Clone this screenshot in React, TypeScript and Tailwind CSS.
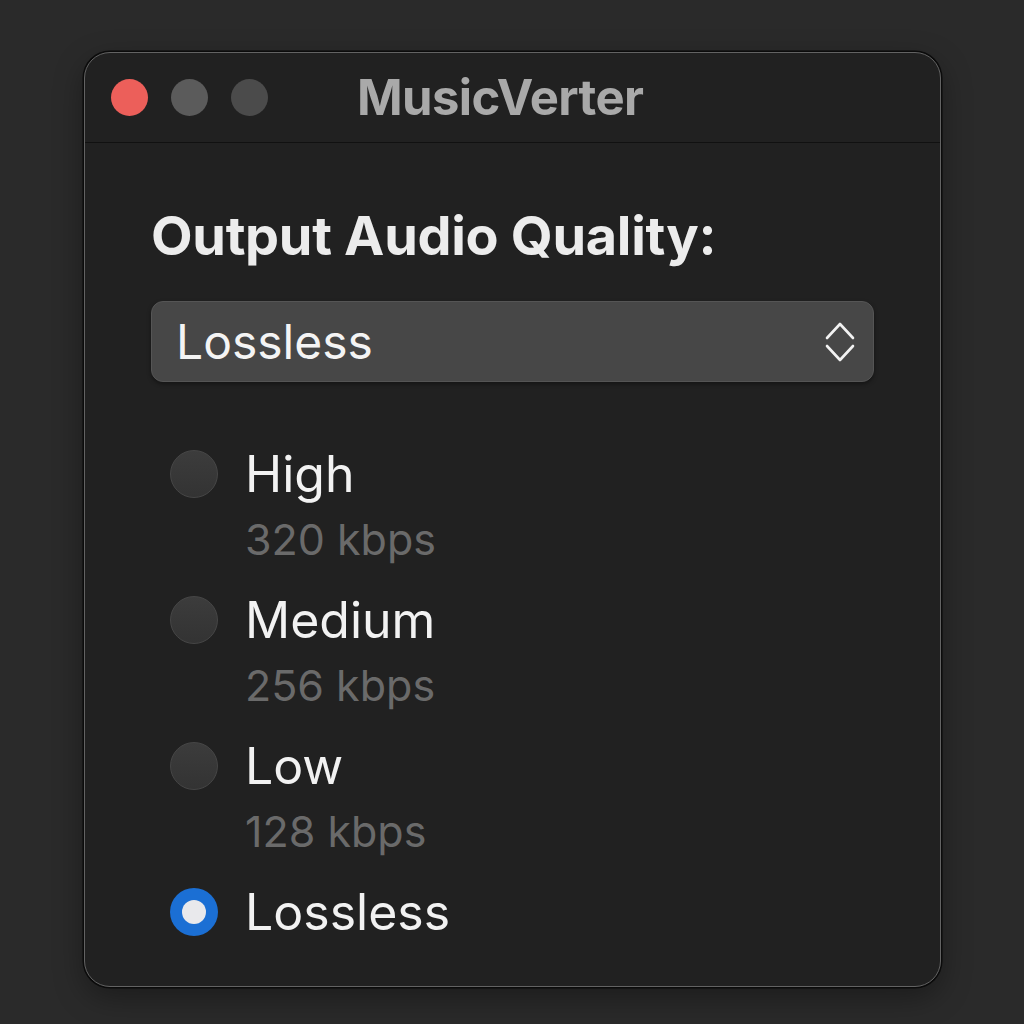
import React from 'react';

interface QualityOption {
  id: string;
  label: string;
  bitrate?: string;
}

const options: QualityOption[] = [
  { id: 'high', label: 'High', bitrate: '320 kbps' },
  { id: 'medium', label: 'Medium', bitrate: '256 kbps' },
  { id: 'low', label: 'Low', bitrate: '128 kbps' },
  { id: 'lossless', label: 'Lossless' },
];

const Radio = ({ checked }: { checked: boolean }) =>
  checked ? (
    <span className="flex items-center justify-center w-[48px] h-[48px] rounded-full bg-[#1b6fd4] shrink-0">
      <span className="w-[24px] h-[24px] rounded-full bg-[#e9e9ec]" />
    </span>
  ) : (
    <span className="w-[48px] h-[48px] rounded-full bg-gradient-to-b from-[#3c3c3c] to-[#333333] border border-[#464646] shrink-0" />
  );

const App = () => {
  const selected = 'lossless';

  return (
    <div
      className="min-h-screen w-full bg-[#2a2a2a] pt-[52px] pl-[84px]"
      style={{ fontFamily: 'Inter, "Liberation Sans", sans-serif' }}
    >
      <div className="flex flex-col w-[857px] h-[935px] rounded-[26px] bg-[#212121] border border-[#636363] shadow-[0_0_0_1.5px_#0b0b0b,0_10px_30px_rgba(0,0,0,0.35)] overflow-hidden">
        {/* Title bar */}
        <div className="flex items-center h-[90px] pl-[26px] border-b border-[#111111] shrink-0">
          <div className="flex items-center gap-[23px]">
            <span className="w-[37px] h-[37px] rounded-full bg-[#ec5f5a]" />
            <span className="w-[37px] h-[37px] rounded-full bg-[#5b5b5b]" />
            <span className="w-[37px] h-[37px] rounded-full bg-[#4b4b4b]" />
          </div>
          <span className="ml-[89px] text-[49px] leading-none font-bold text-[#a9a9a9] tracking-[-0.6px]">
            MusicVerter
          </span>
        </div>

        {/* Body */}
        <div className="flex flex-col px-[66px] pt-[66px]">
          <h1 className="text-[54px] leading-none font-bold text-[#ececec] tracking-[-0.3px]">
            Output Audio Quality:
          </h1>

          <div className="mt-[38px] flex items-center justify-between h-[81px] rounded-[12px] bg-[#474747] border border-[#555555] shadow-[0_2px_4px_rgba(0,0,0,0.4)] pl-[24px] pr-[18px]">
            <span className="text-[48px] leading-none text-[#f4f4f4]">Lossless</span>
            <svg width="30" height="42" viewBox="0 0 30 42" fill="none" stroke="#f2f2f2" strokeWidth="2.6" strokeLinecap="round" strokeLinejoin="round">
              <path d="M2 17 L15 3 L28 17" />
              <path d="M2 25 L15 39 L28 25" />
            </svg>
          </div>

          <div className="mt-[67px] flex flex-col gap-[34px] pl-[19px]">
            {options.map(opt => (
              <div key={opt.id} className="flex flex-col">
                <div className="flex items-center gap-[27px]">
                  <Radio checked={opt.id === selected} />
                  <span className="text-[50px] leading-none text-[#f2f2f2]">{opt.label}</span>
                </div>
                {opt.bitrate && (
                  <span className="mt-[19px] ml-[75px] text-[43px] leading-none text-[#6a6a6a]">
                    {opt.bitrate}
                  </span>
                )}
              </div>
            ))}
          </div>
        </div>
      </div>
    </div>
  );
};

export default App;
